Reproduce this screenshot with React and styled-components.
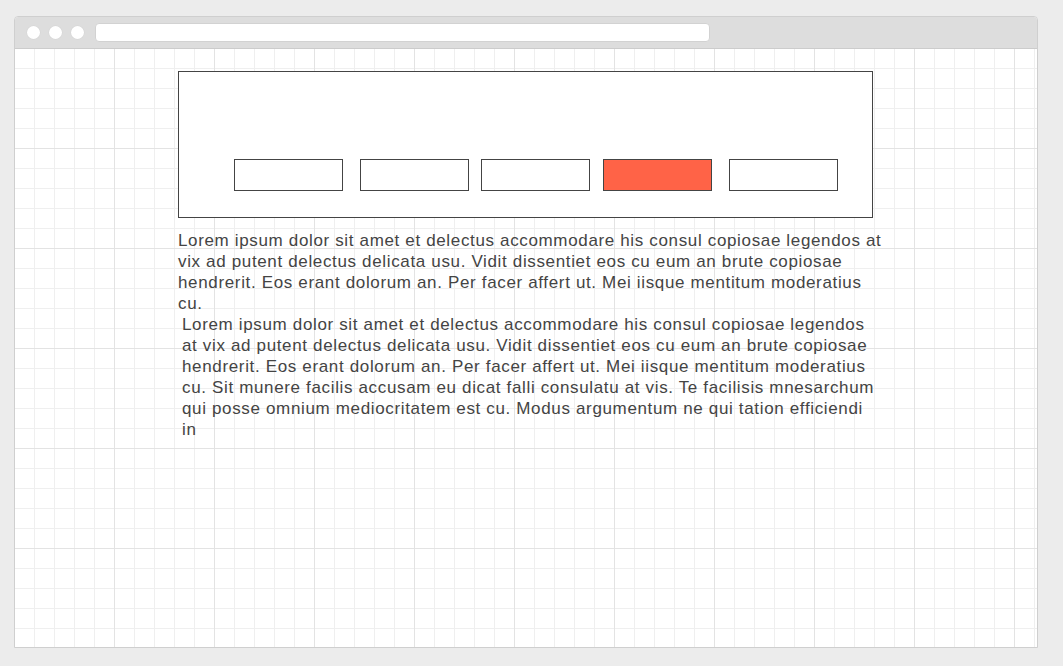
import React from "react";
import styled, { createGlobalStyle } from "styled-components";

const Global = createGlobalStyle`
  html, body { margin: 0; padding: 0; background: #ececec; }
  body { font-family: "Liberation Sans", Arial, sans-serif; }
`;

const Window = styled.div`
  box-sizing: border-box;
  margin: 16px 0 0 14px;
  width: 1024px;
  height: 632px;
  border: 1px solid #cfcfcf;
  border-radius: 4px 4px 0 0;
  background: #fff;
  display: flex;
  flex-direction: column;
  overflow: hidden;
`;

const TitleBar = styled.div`
  height: 32px;
  flex: none;
  box-sizing: border-box;
  background: #dddddd;
  border-bottom: 1px solid #cccccc;
  display: flex;
  align-items: center;
  padding-left: 12px;
  gap: 9px;
`;

const Dot = styled.span`
  width: 13px;
  height: 13px;
  border-radius: 50%;
  background: #fff;
  box-shadow: 0 0 0 0.5px #d4d4d4;
`;

const UrlBar = styled.div`
  margin-left: 2px;
  width: 615px;
  height: 19px;
  box-sizing: border-box;
  background: #fff;
  border: 1px solid #d2d2d2;
  border-radius: 4px;
`;

const Canvas = styled.div`
  flex: 1;
  background-color: #fff;
  background-image:
    linear-gradient(to right, #e3e3e3 1px, transparent 1px),
    linear-gradient(to bottom, #e3e3e3 1px, transparent 1px),
    linear-gradient(to right, #efefef 1px, transparent 1px),
    linear-gradient(to bottom, #efefef 1px, transparent 1px);
  background-size: 100px 100px, 100px 100px, 20px 20px, 20px 20px;
  background-position: -1px -1px;
  padding: 22px 0 0 163px;
  display: flex;
  flex-direction: column;
  align-items: flex-start;
`;

const Banner = styled.div`
  box-sizing: border-box;
  width: 695px;
  height: 147px;
  border: 1px solid #444;
  background: #fff;
  padding: 87px 0 0 55px;
  display: flex;
  align-items: flex-start;
`;

const Tab = styled.div`
  box-sizing: border-box;
  width: 109px;
  height: 32px;
  margin-left: ${(p) => p.$offset}px;
  border: 1px solid #444;
  background: ${(p) => (p.$active ? "#ff6347" : "#fff")};
`;

const Para = styled.p`
  margin: 12px 0 0 ${(p) => p.$indent || 0}px;
  width: ${(p) => p.$width}px;
  font-size: 17px;
  letter-spacing: 0.65px;
  line-height: 21px;
  color: #444;
  & + & { margin-top: 0; }
`;

const tabs = [
  { offset: 0 },
  { offset: 17 },
  { offset: 12 },
  { offset: 13, active: true },
  { offset: 17 },
];

export default function App() {
  return (
    <>
      <Global />
      <Window>
        <TitleBar>
          <Dot />
          <Dot />
          <Dot />
          <UrlBar />
        </TitleBar>
        <Canvas>
          <Banner>
            {tabs.map((t, i) => (
              <Tab key={i} $offset={t.offset} $active={t.active} />
            ))}
          </Banner>
          <Para $width={708}>
            Lorem ipsum dolor sit amet et delectus accommodare his consul copiosae legendos at vix ad putent delectus delicata usu. Vidit dissentiet eos cu eum an brute copiosae hendrerit. Eos erant dolorum an. Per facer affert ut. Mei iisque mentitum moderatius cu.
          </Para>
          <Para $width={696} $indent={4}>
            Lorem ipsum dolor sit amet et delectus accommodare his consul copiosae legendos at vix ad putent delectus delicata usu. Vidit dissentiet eos cu eum an brute copiosae hendrerit. Eos erant dolorum an. Per facer affert ut. Mei iisque mentitum moderatius cu. Sit munere facilis accusam eu dicat falli consulatu at vis. Te facilisis mnesarchum qui posse omnium mediocritatem est cu. Modus argumentum ne qui tation efficiendi in
          </Para>
        </Canvas>
      </Window>
    </>
  );
}
